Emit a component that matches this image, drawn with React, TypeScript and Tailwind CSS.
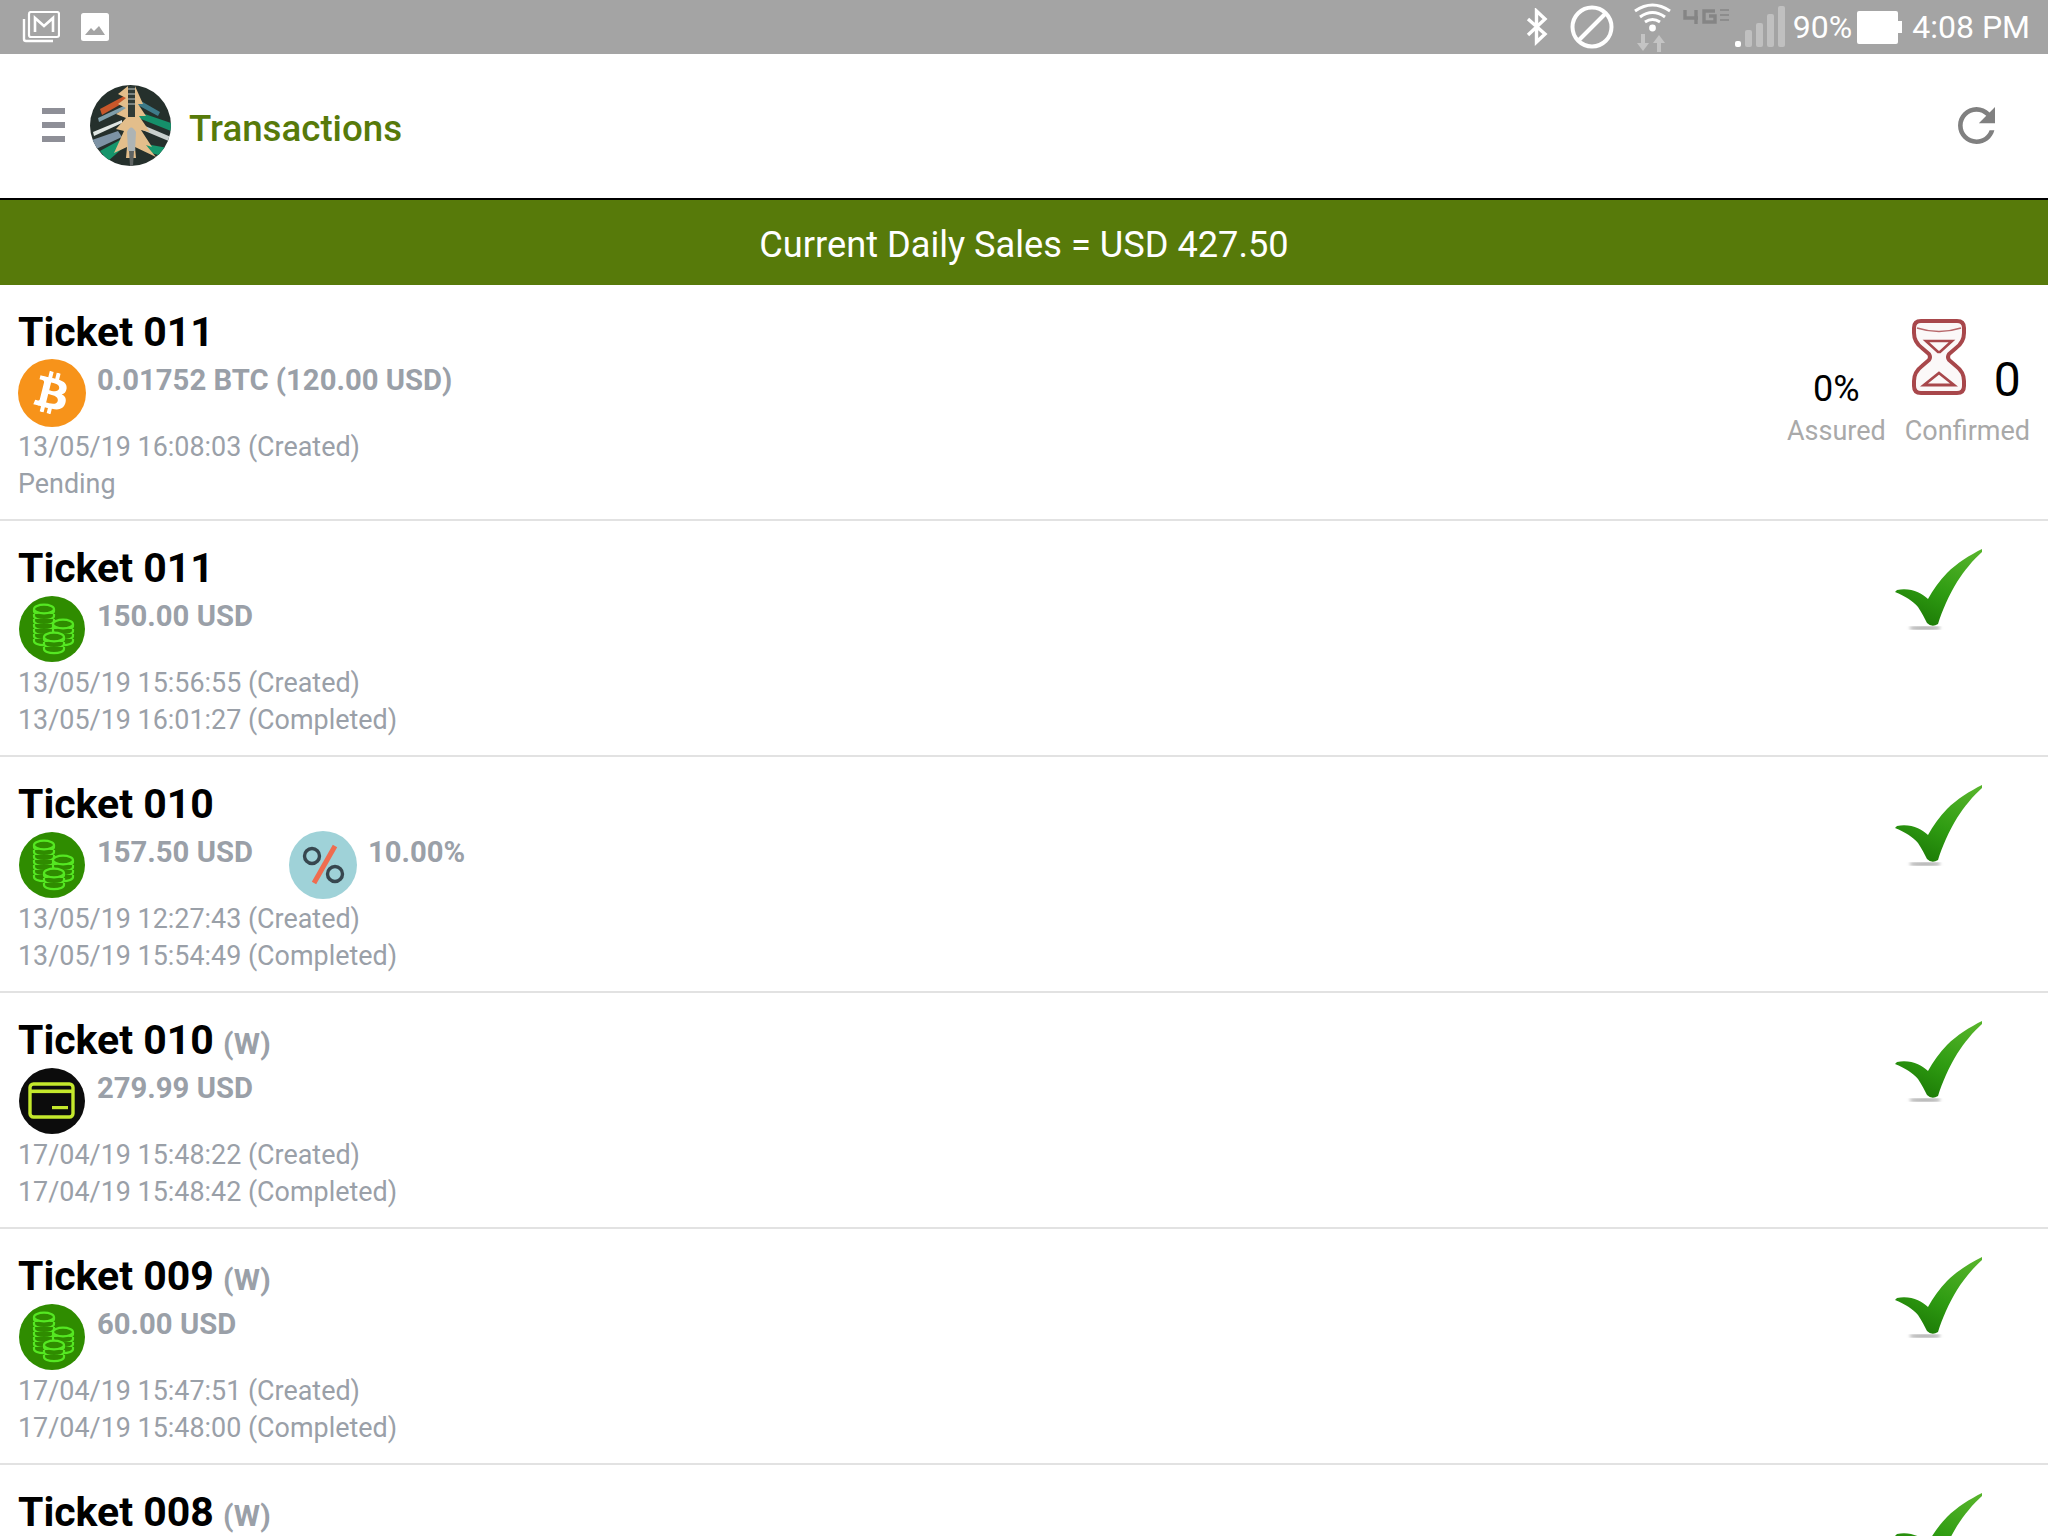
import React from 'react';
import { FaBtc } from 'react-icons/fa';

type Payment = 'btc' | 'cash' | 'card';

interface Ticket {
  name: string;
  web?: boolean;
  payment?: Payment;
  amount?: string;
  discount?: string;
  lines: string[];
  pending?: boolean;
}

const tickets: Ticket[] = [
  { name: 'Ticket 011', payment: 'btc', amount: '0.01752 BTC (120.00 USD)', lines: ['13/05/19 16:08:03 (Created)', 'Pending'], pending: true },
  { name: 'Ticket 011', payment: 'cash', amount: '150.00 USD', lines: ['13/05/19 15:56:55 (Created)', '13/05/19 16:01:27 (Completed)'] },
  { name: 'Ticket 010', payment: 'cash', amount: '157.50 USD', discount: '10.00%', lines: ['13/05/19 12:27:43 (Created)', '13/05/19 15:54:49 (Completed)'] },
  { name: 'Ticket 010', web: true, payment: 'card', amount: '279.99 USD', lines: ['17/04/19 15:48:22 (Created)', '17/04/19 15:48:42 (Completed)'] },
  { name: 'Ticket 009', web: true, payment: 'cash', amount: '60.00 USD', lines: ['17/04/19 15:47:51 (Created)', '17/04/19 15:48:00 (Completed)'] },
  { name: 'Ticket 008', web: true, lines: [] },
];

const CoinStack = ({ x, top, count }: { x: number; top: number; count: number }) => (
  <g fill="none" stroke="#55e822" strokeWidth="2.2">
    {Array.from({ length: count }).map((_, i) => (
      <path key={i} d={`M${x - 10} ${top + i * 5}v2c0 2.4 4.5 4.2 10 4.2s10-1.8 10-4.2v-2`} fill="#2f8c00" />
    ))}
    <ellipse cx={x} cy={top} rx="10" ry="4.4" fill="#2f8c00" />
  </g>
);

const CashIcon = () => (
  <svg viewBox="0 0 68 68" className="w-[68px] h-[68px] shrink-0">
    <circle cx="34" cy="34" r="33" fill="#2f8c00" />
    <CoinStack x={26} top={14} count={7} />
    <CoinStack x={45} top={29} count={4} />
    <CoinStack x={36} top={42} count={3} />
  </svg>
);

const CardIcon = () => (
  <svg viewBox="0 0 68 68" className="w-[68px] h-[68px] shrink-0">
    <circle cx="34" cy="34" r="33" fill="#0c0c0c" />
    <rect x="12" y="17" width="43" height="33" rx="3.5" fill="none" stroke="#c4e82c" strokeWidth="3.4" />
    <rect x="12" y="22.5" width="43" height="3.6" fill="#c4e82c" />
    <rect x="34" y="39" width="16" height="3.2" fill="#c4e82c" />
  </svg>
);

const BtcIcon = () => (
  <div className="w-[68px] h-[68px] shrink-0 rounded-full bg-[#f7931a] flex items-center justify-center">
    <FaBtc className="w-[40px] h-[42px] text-white rotate-[14deg]" />
  </div>
);

const PercentIcon = () => (
  <svg viewBox="0 0 68 68" className="w-[68px] h-[68px] shrink-0">
    <circle cx="34" cy="34" r="34" fill="#9fd2d8" />
    <circle cx="23" cy="25" r="7.5" fill="none" stroke="#37474f" strokeWidth="3.4" />
    <circle cx="46" cy="43" r="7.5" fill="none" stroke="#37474f" strokeWidth="3.4" />
    <path d="M46 15L25 52" stroke="#ef6c4f" strokeWidth="5" />
  </svg>
);

const CheckIcon = () => (
  <svg viewBox="0 0 88 86" className="w-[88px] h-[86px]">
    <defs>
      <linearGradient id="checkFill" x1="0.8" y1="0" x2="0.3" y2="1">
        <stop offset="0" stopColor="#55b32a" />
        <stop offset="0.55" stopColor="#2f9c12" />
        <stop offset="1" stopColor="#1c7a06" />
      </linearGradient>
      <filter id="checkBlur">
        <feGaussianBlur stdDeviation="1.5" />
      </filter>
    </defs>
    <ellipse cx="30" cy="79" rx="16" ry="1.6" fill="#999" filter="url(#checkBlur)" />
    <path
      d="M87 0C75 6 62 14 52 24C44 32 38 41 33 50C27 44 15 38 2 41L0 43C10 47 18 52 23 58C27 64 30 70 32 74Q37 79 43 75C47 62 54 46 62 33C69 22 78 11 87 3Z"
      fill="url(#checkFill)"
    />
  </svg>
);

const HourglassIcon = () => (
  <svg viewBox="0 0 54 76" className="w-[54px] h-[76px]">
    <path
      d="M9 2h36q7 0 7 7v5q0 9-8 15l-7 6q-2 3 0 6l7 6q8 6 8 15v5q0 7-7 7H9q-7 0-7-7v-5q0-9 8-15l7-6q2-3 0-6l-7-6q-8-6-8-15V9q0-7 7-7z"
      fill="#fbf8f8"
      stroke="#a8474b"
      strokeWidth="4"
    />
    <path d="M5 9q22 7 44 0" fill="none" stroke="#b8686b" strokeWidth="1.6" />
    <path d="M14 22h26L28 33h-2z" fill="none" stroke="#a8474b" strokeWidth="2.6" />
    <path d="M27 54L42 66H12z" fill="none" stroke="#a8474b" strokeWidth="2.8" />
  </svg>
);

const Avatar = () => (
  <svg viewBox="0 0 81 81" className="w-[81px] h-[81px]">
    <defs>
      <clipPath id="avatarClip">
        <circle cx="40.5" cy="40.5" r="40.5" />
      </clipPath>
    </defs>
    <g clipPath="url(#avatarClip)">
      <rect width="81" height="81" fill="#25302c" />
      <path d="M10 24L38 9L40 14L12 30z" fill="#c9572a" />
      <path d="M8 33L38 19L38 23L9 37z" fill="#7f9eaa" />
      <path d="M44 12L70 27L68 31L44 18z" fill="#3e7b8a" />
      <path d="M46 26L81 38V46L46 32z" fill="#15906a" />
      <path d="M3 47L32 35V38L4 51z" fill="#dfe5e2" />
      <path d="M48 38L81 52V57L50 44z" fill="#c9d0cd" />
      <path d="M2 55L28 46L32 52L6 64z" fill="#7d93a5" />
      <path d="M10 66L30 55L34 62L18 76z" fill="#16966c" />
      <path d="M50 58L78 63L72 71L54 66z" fill="#16966c" />
      <path d="M38 1L28 9L36 13L28 19L36 23L26 29L36 33L26 44L34 46L24 68L37 62L36 73L46 73L45 62L66 72L56 60L62 62L51 45L60 47L49 31L56 31L48 19L53 19L45 1z" fill="#e3be8b" />
      <path d="M38 1H45V32H38z" fill="#2f3a36" />
      <path d="M38 4H45M38 9H45M38 14H45M38 19H45" stroke="#c5cbc8" strokeWidth="1" />
      <path d="M37 47Q41 38 46 47L45 66H38z" fill="#aeb4b4" />
      <path d="M39 66H44L43 81H40z" fill="#5f6463" />
    </g>
  </svg>
);

const MailIcon = () => (
  <svg viewBox="0 0 38 32" className="w-[38px] h-[32px]">
    <path d="M2 8v20q0 2 2 2h27" fill="none" stroke="#fff" strokeWidth="2.4" />
    <rect x="7" y="1" width="30" height="25" rx="2" fill="none" stroke="#fff" strokeWidth="2.2" />
    <path d="M13 21V7l9 8 9-8v14" fill="none" stroke="#fff" strokeWidth="2.6" />
  </svg>
);

const ImageIcon = () => (
  <svg viewBox="0 0 28 28" className="w-[28px] h-[28px]">
    <rect width="28" height="28" rx="2.5" fill="#fff" />
    <path d="M4 22L10 15L13 18L18 13L24 22z" fill="#a4a4a4" />
  </svg>
);

const StatusRight = () => (
  <div className="flex items-center">
    <svg viewBox="0 0 22 38" className="w-[22px] h-[38px]">
      <path d="M2 11L19 26L10.5 34V3L19 11L2 27" fill="none" stroke="#fff" strokeWidth="3.4" />
    </svg>
    <svg viewBox="0 0 44 44" className="w-[44px] h-[44px] ml-[22px]">
      <circle cx="22" cy="22" r="19.5" fill="none" stroke="#fff" strokeWidth="4" />
      <path d="M8 36L36 8" stroke="#fff" strokeWidth="4" />
    </svg>
    <svg viewBox="0 0 37 50" className="w-[37px] h-[50px] ml-[20px]">
      <g fill="none" stroke="#fff" strokeWidth="3">
        <path d="M1 9Q18.5-3 36 9" />
        <path d="M6 15Q18.5 6 31 15" />
        <path d="M11 20Q18.5 15 26 20" />
      </g>
      <circle cx="18.5" cy="26" r="3.4" fill="#fff" />
      <path d="M7 32h4v9h4l-6 8-6-8h4zM25 33l6 8h-4v9h-4v-9h-4z" fill="#c4c4c4" />
    </svg>
    <svg viewBox="0 0 47 16" className="w-[47px] h-[16px] ml-[12px] mb-[20px]">
      <path d="M2 1v8h13M13 1v14" fill="none" stroke="#858585" strokeWidth="3.4" />
      <path d="M32 2H21v11h11V7h-6" fill="none" stroke="#858585" strokeWidth="3.4" />
      <path d="M37 1h9M37 6h9M37 11h9" stroke="#858585" strokeWidth="1.6" />
    </svg>
    <div className="flex items-end gap-[4px] h-[41px] ml-[5px] mb-[2px]">
      <div className="w-[6px] h-[6px] rounded-[2px] bg-white" />
      <div className="w-[7px] h-[17px] rounded-[2px] bg-[#c0c0c0]" />
      <div className="w-[7px] h-[24px] rounded-[2px] bg-[#c0c0c0]" />
      <div className="w-[7px] h-[33px] rounded-[2px] bg-[#c0c0c0]" />
      <div className="w-[7px] h-[41px] rounded-[2px] bg-[#c0c0c0]" />
    </div>
    <span className="ml-[8px] text-[32px] leading-[54px] text-white font-[Roboto,sans-serif]">90%</span>
    <div className="flex items-center ml-[5px]">
      <div className="w-[41px] h-[33px] rounded-[2px] bg-white" />
      <div className="w-[4px] h-[12px] bg-white" />
    </div>
    <span className="ml-[10px] mr-[18px] text-[32px] leading-[54px] text-white font-[Roboto,sans-serif]">4:08 PM</span>
  </div>
);

const PaymentIcon = ({ kind }: { kind: Payment }) => {
  if (kind === 'btc') return <BtcIcon />;
  if (kind === 'card') return <CardIcon />;
  return <CashIcon />;
};

const TicketRow = ({ ticket }: { ticket: Ticket }) => (
  <div className="flex justify-between border-b-2 border-[#e2e2e2] pl-[18px] pr-[18px] h-[236px] pt-[24px] font-[Roboto,sans-serif]">
    <div>
      <div className="flex items-baseline h-[50px] leading-[47px]">
        <span className="text-[41px] font-bold text-black">{ticket.name}</span>
        {ticket.web && <span className="ml-[9px] text-[30px] font-bold text-[#9aa0a8]">(W)</span>}
      </div>
      {ticket.payment && (
        <div className="flex h-[70px]">
          <PaymentIcon kind={ticket.payment} />
          <span className="ml-[11px] mt-[5px] text-[29.25px] leading-[32px] font-bold text-[#9aa0a8]">{ticket.amount}</span>
          {ticket.discount && (
            <>
              <div className="ml-[36px]">
                <PercentIcon />
              </div>
              <span className="ml-[11px] mt-[5px] text-[29.25px] leading-[32px] font-bold text-[#9aa0a8]">{ticket.discount}</span>
            </>
          )}
        </div>
      )}
      {ticket.lines.map((line) => (
        <div key={line} className="text-[26.9px] leading-[37px] text-[#9aa0a8]">
          {line}
        </div>
      ))}
    </div>
    {ticket.pending ? (
      <div className="flex gap-[19px] pt-[10px] h-[140px]">
        <div className="flex flex-col items-center justify-end">
          <span className="text-[36px] leading-[40px] text-black">0%</span>
          <span className="mt-[4px] text-[27px] leading-[36px] text-[#a9a9a9]">Assured</span>
        </div>
        <div className="flex flex-col justify-end">
          <div className="flex items-start gap-[28px] h-[94px] pl-[7px]">
            <HourglassIcon />
            <span className="mt-[33px] text-[48px] leading-[56px] text-black">0</span>
          </div>
          <span className="text-[27px] leading-[36px] text-[#a9a9a9]">Confirmed</span>
        </div>
      </div>
    ) : (
      <div className="pr-[47px] pt-[4px]">
        <CheckIcon />
      </div>
    )}
  </div>
);

export default function App() {
  return (
    <div className="h-[1536px] overflow-hidden bg-white flex flex-col">
      {/* Status bar */}
      <div className="h-[54px] shrink-0 bg-[#a4a4a4] flex items-center justify-between pl-[22px]">
        <div className="flex items-center gap-[21px]">
          <MailIcon />
          <ImageIcon />
        </div>
        <StatusRight />
      </div>

      {/* Header */}
      <div className="h-[146px] shrink-0 border-b-2 border-black flex items-center justify-between pl-[42px] pr-[53px] pb-[2px]">
        <div className="flex items-center">
          <div className="flex flex-col gap-[8px] w-[23px]">
            <div className="h-[6px] bg-[#8e8f97]" />
            <div className="h-[6px] bg-[#8e8f97]" />
            <div className="h-[6px] bg-[#8e8f97]" />
          </div>
          <div className="ml-[25px]">
            <Avatar />
          </div>
          <span className="ml-[18px] mt-[7px] text-[36.7px] font-medium text-[#577a0a] font-[Roboto,sans-serif]">Transactions</span>
        </div>
        <svg viewBox="4 4 16 16" className="w-[37px] h-[37px]" fill="#808080">
          <path d="M17.65 6.35C16.2 4.9 14.21 4 12 4c-4.42 0-7.99 3.58-7.99 8s3.57 8 7.99 8c3.73 0 6.84-2.55 7.73-6h-2.08c-.82 2.33-3.04 4-5.65 4-3.31 0-6-2.69-6-6s2.69-6 6-6c1.66 0 3.14.69 4.22 1.78L13 11h7V4l-2.35 2.35z" />
        </svg>
      </div>

      {/* Daily sales banner */}
      <div className="h-[85px] shrink-0 bg-[#577a0a] flex items-center justify-center pt-[5px] text-[36.2px] text-white font-[Roboto,sans-serif]">
        Current Daily Sales = USD 427.50
      </div>

      {/* Ticket list */}
      <div className="flex flex-col">
        {tickets.map((ticket, i) => (
          <TicketRow key={i} ticket={ticket} />
        ))}
      </div>
    </div>
  );
}
